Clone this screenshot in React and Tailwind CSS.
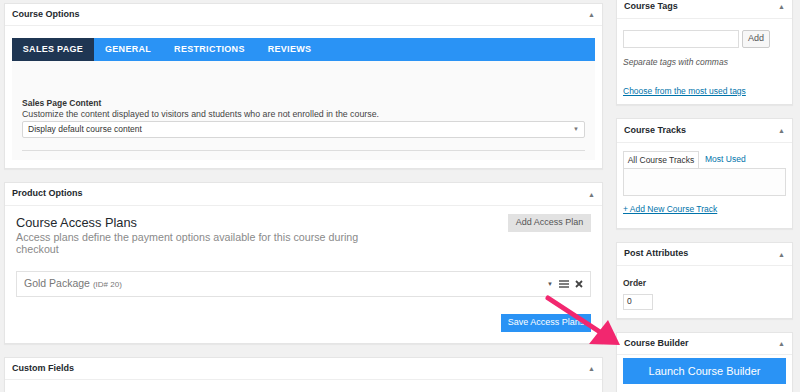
import React from "react";

const font = { fontFamily: '"Liberation Sans", Arial, sans-serif' };

function Caret() {
  return <span className="text-[7px] leading-none text-[#72777c]">▲</span>;
}

function Panel({ title, children, className = "", headerClass = "h-[22px]" }) {
  return (
    <div className={`shrink-0 bg-white border border-[#e5e5e5] shadow-[0_1px_1px_rgba(0,0,0,0.04)] ${className}`}>
      <div className={`flex items-center justify-between px-[7px] border-b border-[#eeeeee] ${headerClass}`}>
        <span className="text-[9px] font-bold text-[#23282d]">{title}</span>
        <Caret />
      </div>
      {children}
    </div>
  );
}

export default function App() {
  return (
    <div
      className="relative w-[800px] h-[392px] overflow-hidden bg-[#f1f1f1] flex items-start"
      style={font}
    >
      {/* Left column */}
      <div className="shrink-0 ml-[4px] w-[599px] flex flex-col gap-[13px] pt-[3px]">
        <Panel title="Course Options" className="h-[166px]">
          <div className="px-[7px] pt-[12px]">
            <div className="flex h-[23px] bg-[#2a93f5] text-white text-[9px] font-bold tracking-[0.3px]">
              <div className="w-[82px] bg-[#1f3653] flex items-center justify-center">SALES PAGE</div>
              <div className="px-[11px] flex items-center">GENERAL</div>
              <div className="px-[12px] flex items-center">RESTRICTIONS</div>
              <div className="px-[11px] flex items-center">REVIEWS</div>
            </div>
            <div className="bg-[#fafafa] h-[99px] px-[10px] pt-[37px]">
              <div className="text-[8.5px] font-bold text-[#333] leading-[11px]">Sales Page Content</div>
              <div className="text-[8.8px] text-[#444] leading-[11px]">
                Customize the content displayed to visitors and students who are not enrolled in the course.
              </div>
              <div className="mt-[1px] h-[17px] border border-[#d7d7d7] rounded-[2px] bg-white flex items-center justify-between px-[5px] text-[8.5px] text-[#333]">
                <span>Display default course content</span>
                <span className="text-[6px] text-[#777]">▼</span>
              </div>
              <div className="mt-[12px] border-t border-[#dddddd]" />
            </div>
          </div>
        </Panel>

        <Panel title="Product Options" className="h-[162px]" headerClass="h-[23px]">
          <div className="px-[11px] pt-[8px]">
            <div className="flex justify-between items-start">
              <div>
                <div className="text-[12.8px] text-[#23282d] leading-[16px] pt-[1px]">Course Access Plans</div>
                <div className="text-[10.7px] text-[#8a8a8a] leading-[12px] w-[362px]">
                  Access plans define the payment options available for this course during checkout
                </div>
              </div>
              <div className="h-[18px] w-[83px] bg-[#e2e2e2] text-[#555] text-[9px] flex items-center justify-center">
                Add Access Plan
              </div>
            </div>
            <div className="mt-[16px] h-[26px] border border-[#e2e2e2] flex items-center justify-between px-[7px]">
              <span className="text-[10.5px] text-[#777]">
                Gold Package <span className="text-[8px]">(ID# 20)</span>
              </span>
              <span className="flex items-center gap-[6px] text-[#555]">
                <span className="text-[6px]">▼</span>
                <svg width="10" height="8" viewBox="0 0 10 8"><path d="M0 1h10M0 4h10M0 7h10" stroke="#555" strokeWidth="1.4" /></svg>
                <svg width="8" height="8" viewBox="0 0 8 8"><path d="M1 1l6 6M7 1l-6 6" stroke="#444" strokeWidth="1.8" /></svg>
              </span>
            </div>
            <div className="flex justify-end mt-[17px]">
              <div className="h-[18px] w-[90px] bg-[#2a93f5] text-white text-[9px] flex items-center justify-center">
                Save Access Plans
              </div>
            </div>
          </div>
        </Panel>

        <Panel title="Custom Fields" className="h-[60px]" headerClass="h-[22px]" />
      </div>

      {/* Right column */}
      <div className="shrink-0 ml-[13px] w-[177px] flex flex-col gap-[13px] mt-[-6px]">
        <Panel title="Course Tags" className="h-[111px]" headerClass="h-[24px]">
          <div className="px-[6px] pt-[11px]">
            <div className="flex gap-[3px]">
              <div className="w-[116px] h-[18px] border border-[#ddd] bg-white" />
              <div className="w-[28px] h-[18px] border border-[#ccc] bg-[#f7f7f7] rounded-[2px] text-[9px] text-[#555] flex items-center justify-center">Add</div>
            </div>
            <div className="mt-[8px] text-[8.5px] italic text-[#555]">Separate tags with commas</div>
            <div className="mt-[16px] text-[8.5px] text-[#0073aa] underline">Choose from the most used tags</div>
          </div>
        </Panel>

        <Panel title="Course Tracks" className="h-[111px]" headerClass="h-[24px]">
          <div className="px-[6px] pt-[8px]">
            <div className="flex text-[8.5px]">
              <div className="w-[76px] h-[17px] border border-[#ddd] border-b-0 bg-white flex items-center justify-center text-[#333]">All Course Tracks</div>
              <div className="ml-[6px] flex items-center text-[#0073aa]">Most Used</div>
            </div>
            <div className="h-[28px] border border-[#ddd] bg-[#fdfdfd]" />
            <div className="mt-[7px] text-[8.5px] text-[#0073aa] underline">+ Add New Course Track</div>
          </div>
        </Panel>

        <Panel title="Post Attributes" className="h-[77px]" headerClass="h-[23px]">
          <div className="px-[6px] pt-[11px]">
            <div className="text-[8.5px] font-bold text-[#333]">Order</div>
            <div className="mt-[4px] w-[30px] h-[16px] border border-[#ddd] bg-white text-[8.5px] text-[#333] flex items-center px-[3px]">0</div>
          </div>
        </Panel>

        <Panel title="Course Builder" className="h-[70px]" headerClass="h-[22px]">
          <div className="px-[6px] pt-[3px]">
            <div className="h-[26px] bg-[#2a93f5] text-white text-[11px] flex items-center justify-center">Launch Course Builder</div>
          </div>
        </Panel>
      </div>

      {/* Arrow */}
      <svg className="absolute left-[540px] top-[290px]" width="90" height="60" viewBox="540 290 90 60">
        <path d="M548 298 L600 332" stroke="#f2276f" strokeWidth="5" strokeLinecap="round" />
        <path d="M620 345 L608 320 L589 344 Z" fill="#f2276f" />
      </svg>
    </div>
  );
}
